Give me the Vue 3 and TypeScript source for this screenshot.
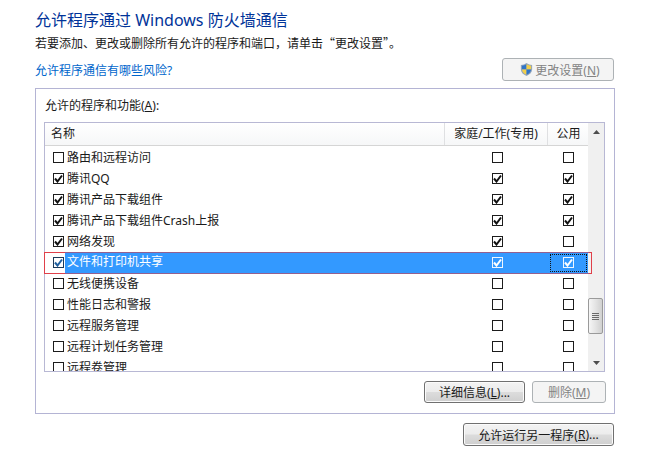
<script setup lang="ts">
interface Row {
  name: string;
  home: boolean;
  pub: boolean;
  selected?: boolean;
}

const rows: Row[] = [
  { name: "路由和远程访问", home: false, pub: false },
  { name: "腾讯QQ", home: true, pub: true },
  { name: "腾讯产品下载组件", home: true, pub: true },
  { name: "腾讯产品下载组件Crash上报", home: true, pub: true },
  { name: "网络发现", home: true, pub: false },
  { name: "文件和打印机共享", home: true, pub: true, selected: true },
  { name: "无线便携设备", home: false, pub: false },
  { name: "性能日志和警报", home: false, pub: false },
  { name: "远程服务管理", home: false, pub: false },
  { name: "远程计划任务管理", home: false, pub: false },
  { name: "远程卷管理", home: false, pub: false },
];
</script>

<template>
  <div class="page">
    <h1 class="title">允许程序通过 Windows 防火墙通信</h1>
    <p class="desc">若要添加、更改或删除所有允许的程序和端口，请单击“更改设置”。</p>

    <div class="link-row">
      <a class="link">允许程序通信有哪些风险?</a>
      <button class="btn btn-off btn-settings">
        <svg class="shield" width="13" height="15" viewBox="0 0 15 16">
          <path d="M7.500 .5C5.500 2 3.500 2.600 1 2.800V8c0 3.500 3 6 6.500 7.500C11 14 14 11.500 14 8V2.800C11.500 2.600 9.500 2 7.500 .5Z" fill="#93a5bd" />
          <path d="M7.500 2C6 3 4.200 3.600 2.200 3.800V8H7.500Z" fill="#2f74c8" />
          <path d="M7.500 2C9 3 10.800 3.600 12.800 3.800V8H7.500Z" fill="#f2cf4a" />
          <path d="M2.200 8H7.500V14.100C4.800 13 2.500 11 2.200 8Z" fill="#f2cf4a" />
          <path d="M12.800 8H7.500V14.100C10.200 13 12.500 11 12.800 8Z" fill="#2f74c8" />
        </svg>
        <span>更改设置(<u>N</u>)</span>
      </button>
    </div>

    <section class="panel">
      <div class="panel-label">允许的程序和功能(<u>A</u>):</div>

      <div class="list">
        <div class="list-main">
          <div class="head">
            <div class="cell-name head-name">名称</div>
            <div class="head-home head-col">家庭/工作(专用)</div>
            <div class="head-pub head-col">公用</div>
          </div>
          <div class="body-rows">
            <div v-for="row in rows" :key="row.name" class="row" :class="{ selected: row.selected }">
              <div class="cell-name name-wrap">
                <span class="check" :class="{ on: row.home || row.pub }">
                  <svg v-if="row.home || row.pub" width="9" height="9" viewBox="0 0 9 9">
                    <path d="M1 4.500 3.500 7.500 8 1.500" fill="none" stroke-width="2" />
                  </svg>
                </span>
                <span class="name">{{ row.name }}</span>
              </div>
              <div class="cell-home">
                <span class="check" :class="{ on: row.home }">
                  <svg v-if="row.home" width="9" height="9" viewBox="0 0 9 9">
                    <path d="M1 4.500 3.500 7.500 8 1.500" fill="none" stroke-width="2" />
                  </svg>
                </span>
              </div>
              <div class="cell-pub">
                <span class="focus">
                  <span class="check" :class="{ on: row.pub }">
                    <svg v-if="row.pub" width="9" height="9" viewBox="0 0 9 9">
                      <path d="M1 4.500 3.500 7.500 8 1.500" fill="none" stroke-width="2" />
                    </svg>
                  </span>
                </span>
              </div>
            </div>
          </div>
        </div>

        <div class="scrollbar">
          <div class="arrow">
            <svg width="7" height="4" viewBox="0 0 7 4"><path d="M3.500 0 7 4H0Z" fill="#4d4d4d" /></svg>
          </div>
          <div class="track">
            <div class="thumb">
              <span class="grip"></span>
              <span class="grip"></span>
              <span class="grip"></span>
              <span class="grip"></span>
            </div>
          </div>
          <div class="arrow">
            <svg width="7" height="4" viewBox="0 0 7 4"><path d="M0 0H7L3.500 4Z" fill="#4d4d4d" /></svg>
          </div>
        </div>

        <div class="red-box"></div>
      </div>

      <div class="panel-actions">
        <button class="btn btn-details">详细信息(<u>L</u>)...</button>
        <button class="btn btn-off btn-delete">删除(<u>M</u>)</button>
      </div>
    </section>

    <div class="foot">
      <button class="btn btn-another">允许运行另一程序(<u>R</u>)...</button>
    </div>
  </div>
</template>

<style scoped>
.page {
  width: 649px;
  height: 453px;
  box-sizing: border-box;
  padding: 10px 35px 0;
  background: #fff;
  color: #1a1a1a;
  font-family: "Noto Sans", "Noto Sans CJK SC", sans-serif;
  font-size: 12px;
  overflow: hidden;
}

.title {
  margin: 0;
  font-size: 16px;
  line-height: 20px;
  font-weight: 400;
  color: #003399;
}

.desc {
  margin: 4px 0 0;
  line-height: 18px;
  font-family: "Noto Sans CJK SC", sans-serif;
}

.link-row {
  display: flex;
  justify-content: space-between;
  align-items: center;
  width: 579px;
  margin-top: 6px;
  height: 24px;
}

.link {
  color: #0066cc;
}

.btn {
  box-sizing: border-box;
  height: 23px;
  padding: 0;
  border: 1px solid #707070;
  border-radius: 3px;
  background: linear-gradient(#f3f3f3 0%, #ececec 48%, #dcdcdc 52%, #cfcfcf 100%);
  box-shadow: inset 0 0 0 1px #fbfbfb;
  color: #1a1a1a;
  font: inherit;
  display: flex;
  align-items: center;
  justify-content: center;
}

.btn-off {
  border-color: #adb2b5;
  background: #f4f4f4;
  box-shadow: none;
  color: #838383;
}

.btn-settings {
  width: 112px;
  gap: 2px;
  padding-left: 4px;
  margin-top: -1px;
}

.shield {
  flex: none;
}

.panel {
  box-sizing: border-box;
  width: 580px;
  height: 326px;
  margin-top: 6px;
  border: 1px solid #b4b4d4;
  padding: 8px 8px 0;
}

.panel-label {
  line-height: 18px;
  padding-left: 1px;
}

.list {
  position: relative;
  display: flex;
  width: 561px;
  height: 250px;
  box-sizing: border-box;
  margin-top: 7px;
  border: 1px solid #b8b8d4;
}

.list-main {
  flex: 1;
  min-width: 0;
  display: flex;
  flex-direction: column;
}

.head {
  display: flex;
  height: 23px;
  box-sizing: border-box;
  flex: none;
  border-bottom: 1px solid #d5d5d5;
  background: linear-gradient(#ffffff, #f6f7f8);
}

.head-name {
  padding-left: 6px;
  line-height: 22px;
}

.head-col {
  border-left: 1px solid #dfe0e2;
  line-height: 22px;
  text-align: center;
  box-sizing: border-box;
  white-space: nowrap;
}

.head-home {
  width: 103px;
  flex: none;
}

.head-pub {
  width: 42px;
  flex: none;
}

.cell-name {
  width: 399px;
  flex: none;
  box-sizing: border-box;
}

.cell-home {
  width: 103px;
  flex: none;
  box-sizing: border-box;
  padding-left: 3px;
  display: flex;
  align-items: center;
  justify-content: center;
}

.cell-pub {
  width: 42px;
  flex: none;
  display: flex;
  align-items: center;
  justify-content: center;
}

.body-rows {
  flex: 1;
  overflow: hidden;
  padding-top: 1px;
}

.row {
  display: flex;
  height: 21px;
  align-items: center;
}

.name-wrap {
  display: flex;
  align-items: center;
  padding-left: 8px;
  height: 100%;
}

.name {
  margin-left: 1px;
  padding-left: 2px;
  line-height: 20px;
  flex: 1;
}

.check {
  box-sizing: border-box;
  width: 11px;
  height: 11px;
  border: 1px solid #1c1c1c;
  background: #fff;
  display: inline-flex;
  align-items: center;
  justify-content: center;
  flex: none;
}

.check svg {
  stroke: #111;
}

.focus {
  display: flex;
  align-items: center;
  justify-content: center;
  width: 37px;
  height: 18px;
  box-sizing: border-box;
}

.row.selected .name,
.row.selected .cell-home,
.row.selected .cell-pub {
  background: #3399ff;
  color: #fff;
  height: 100%;
}

.row.selected .focus {
  border: 1px dotted #111;
}

.row.selected .cell-home .check,
.row.selected .cell-pub .check {
  border-color: #eef6ff;
  background: #3399ff;
}

.row.selected .cell-home svg,
.row.selected .cell-pub svg {
  stroke: #fff;
}

.row.selected .name-wrap .check {
  border-color: #1c3a5a;
}

.row.selected .name-wrap svg {
  stroke: #1f5f9f;
}

.scrollbar {
  width: 16px;
  flex: none;
  display: flex;
  flex-direction: column;
  background: #f0f0f0;
}

.arrow {
  height: 17px;
  flex: none;
  display: flex;
  align-items: center;
  justify-content: center;
}

.track {
  flex: 1;
  padding-top: 158px;
  box-sizing: border-box;
}

.thumb {
  box-sizing: border-box;
  width: 15px;
  height: 36px;
  border: 1px solid #9a9a9a;
  border-radius: 2px;
  background: linear-gradient(90deg, #f6f6f6, #e4e4e4 50%, #d0d0d0);
  display: flex;
  flex-direction: column;
  align-items: center;
  justify-content: center;
  gap: 1px;
}

.grip {
  width: 7px;
  height: 1px;
  background: #6a6a6a;
}

/* annotation over the list: red on white, purple where it crosses the blue row */
.red-box {
  position: absolute;
  left: -1px;
  top: 129px;
  width: 548px;
  height: 22px;
  box-sizing: border-box;
  border: 1px solid #e0404a;
  border-image: linear-gradient(90deg, #e0404a 21px, #93608f 21px, #93608f 545px, #e0404a 545px) 1;
  pointer-events: none;
}

.panel-actions {
  display: flex;
  justify-content: flex-end;
  gap: 7px;
  margin-top: 9px;
}

.btn-details {
  width: 101px;
  height: 22px;
}

.btn-delete {
  width: 74px;
  height: 22px;
}

.foot {
  display: flex;
  justify-content: flex-end;
  width: 579px;
  margin-top: 9px;
}

.btn-another {
  width: 151px;
}
</style>
